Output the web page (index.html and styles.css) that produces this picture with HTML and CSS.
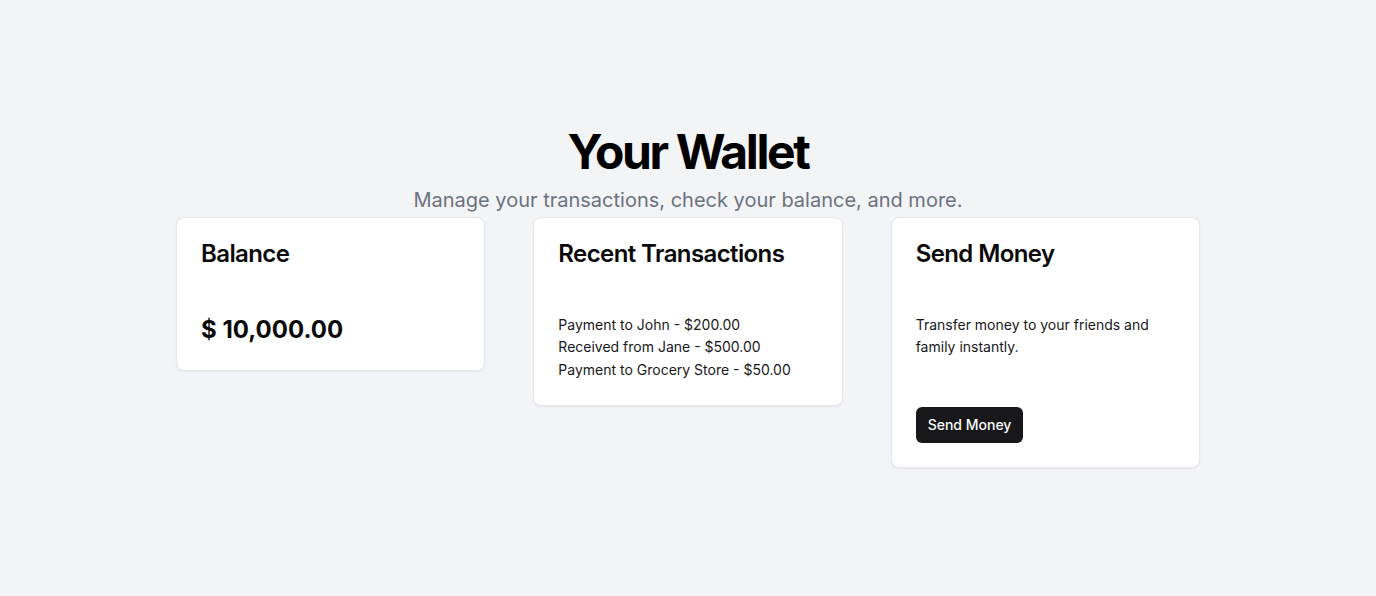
FILE: index.html
```html
<!DOCTYPE html>
<html lang="en">
<head>
<meta charset="utf-8">
<title>Your Wallet</title>
<link rel="stylesheet" href="styles.css">
</head>
<body>
<main class="page">
  <header class="hero">
    <h1 class="hero-title">Your Wallet</h1>
    <p class="hero-sub">Manage your transactions, check your balance, and more.</p>
  </header>
  <section class="cards">
    <div class="card">
      <h3 class="card-title">Balance</h3>
      <div class="card-body">
        <p class="amount">$ 10,000.00</p>
      </div>
    </div>
    <div class="card">
      <h3 class="card-title">Recent Transactions</h3>
      <div class="card-body">
        <ul class="tx-list">
          <li>Payment to John - $200.00</li>
          <li>Received from Jane - $500.00</li>
          <li>Payment to Grocery Store - $50.00</li>
        </ul>
      </div>
    </div>
    <div class="card">
      <h3 class="card-title">Send Money</h3>
      <div class="card-body">
        <p class="text">Transfer money to your friends and family instantly.</p>
        <button class="btn" type="button">Send Money</button>
      </div>
    </div>
  </section>
</main>
</body>
</html>
```

FILE: styles.css
```css
* { box-sizing: border-box; }
html, body {
  margin: 0;
  padding: 0;
}
body {
  background: #f3f4f6;
  font-family: Inter, "Liberation Sans", sans-serif;
  color: #0a0a0a;
  min-height: 596px;
}
.page {
  padding-top: 128px;
  display: flex;
  flex-direction: column;
  align-items: center;
}
.hero {
  text-align: center;
}
.hero-title {
  margin: 0;
  font-size: 48px;
  line-height: 48px;
  font-weight: 700;
  letter-spacing: -0.05em;
  color: #000;
}
.hero-sub {
  margin: 10px 0 0;
  font-size: 20px;
  line-height: 28px;
  color: #6b7280;
}
.cards {
  margin-top: 3px;
  width: 1024px;
  display: grid;
  grid-template-columns: repeat(3, 1fr);
  gap: 48px;
  align-items: start;
}
.card {
  background: #fff;
  border: 1px solid #e5e7eb;
  border-radius: 8px;
  box-shadow: 0 1px 2px rgba(0,0,0,0.05);
  padding: 24px;
}
.card-title {
  margin: 0;
  font-size: 24px;
  line-height: 24px;
  font-weight: 600;
  letter-spacing: -0.025em;
  color: #0a0a0a;
}
.card-body {
  margin-top: 48px;
}
.amount {
  margin: 0;
  font-size: 24px;
  line-height: 32px;
  font-weight: 700;
  color: #0a0a0a;
}
.tx-list {
  list-style: none;
  margin: 0;
  padding: 0;
  font-size: 14px;
  line-height: 22.4px;
  color: #18181b;
}
.text {
  margin: 0;
  font-size: 14px;
  line-height: 22.4px;
  color: #18181b;
}
.btn {
  margin-top: 48px;
  height: 36px;
  padding: 0 12px;
  border: 0;
  border-radius: 6px;
  background: #18181b;
  color: #fafafa;
  font-family: Inter, "Liberation Sans", sans-serif;
  font-size: 14px;
  font-weight: 500;
  display: inline-flex;
  align-items: center;
}
```
